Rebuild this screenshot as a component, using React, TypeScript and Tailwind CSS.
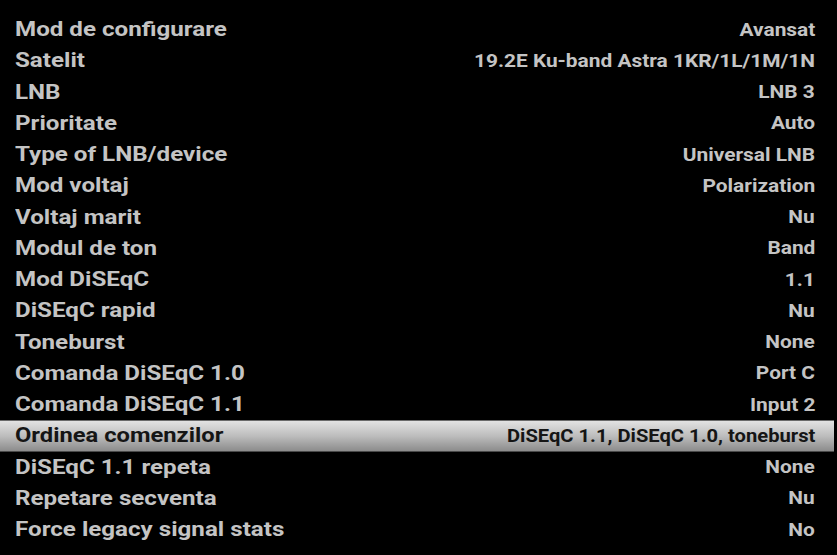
import React from "react";

const rows: [string, string][] = [
  ["Mod de configurare", "Avansat"],
  ["Satelit", "19.2E Ku-band Astra 1KR/1L/1M/1N"],
  ["LNB", "LNB 3"],
  ["Prioritate", "Auto"],
  ["Type of LNB/device", "Universal LNB"],
  ["Mod voltaj", "Polarization"],
  ["Voltaj marit", "Nu"],
  ["Modul de ton", "Band"],
  ["Mod DiSEqC", "1.1"],
  ["DiSEqC rapid", "Nu"],
  ["Toneburst", "None"],
  ["Comanda DiSEqC 1.0", "Port C"],
  ["Comanda DiSEqC 1.1", "Input 2"],
  ["Ordinea comenzilor", "DiSEqC 1.1, DiSEqC 1.0, toneburst"],
  ["DiSEqC 1.1 repeta", "None"],
  ["Repetare secventa", "Nu"],
  ["Force legacy signal stats", "No"],
];

export default function App() {
  return (
    <div
      className="w-[837px] h-[555px] bg-black overflow-hidden pt-[14px]"
      style={{ fontFamily: "Roboto, 'Liberation Sans', sans-serif" }}
    >
      <div className="w-[834px] flex flex-col">
        {rows.map(([label, value], i) => {
          const sel = i === 13;
          return (
            <div
              key={i}
              className={
                "h-[31.25px] flex items-center justify-between pl-[15px] pr-[19px] " +
                (sel
                  ? "bg-gradient-to-b from-[#e2e2e2] via-[#bdbdbd] to-[#8c8c8c] border-t border-b border-t-[#6a6a6a] border-b-[#4a4a4a] text-[#151515]"
                  : "text-[#c4c4c4]")
              }
            >
              <span
                className={
                  "text-[21px] font-bold leading-none origin-left whitespace-nowrap " +
                  (sel ? "scale-x-[1.13]" : "scale-x-[1.15]")
                }
              >
                {label}
              </span>
              <span
                className={
                  "text-[18px] font-bold leading-none origin-right whitespace-nowrap " +
                  (sel ? "scale-x-[1.12]" : "scale-x-[1.16]")
                }
              >
                {value}
              </span>
            </div>
          );
        })}
      </div>
    </div>
  );
}
